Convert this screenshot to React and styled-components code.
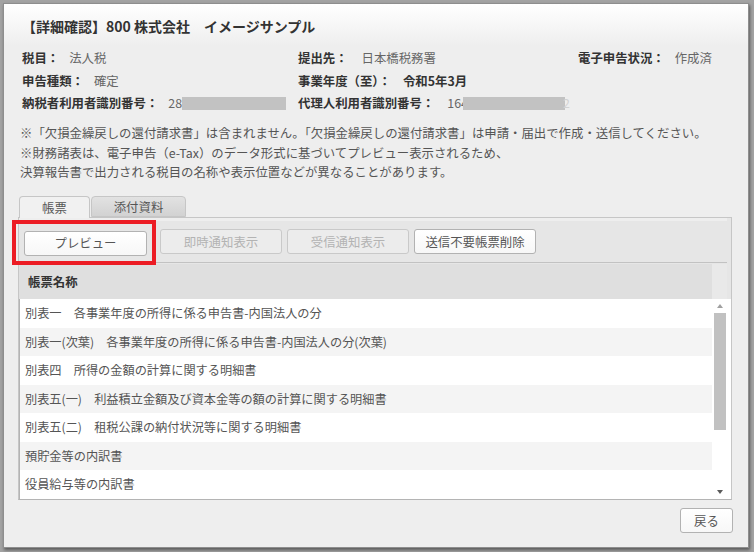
import React from "react";
import styled, { createGlobalStyle } from "styled-components";

const GlobalStyle = createGlobalStyle`
  html, body {
    margin: 0;
    padding: 0;
  }
  body {
    background: #a3a3a3;
    font-family: "Noto Sans CJK JP", "Noto Sans", sans-serif;
    color: #333;
  }
`;

const Backdrop = styled.div`
  width: 754px;
  height: 552px;
  box-sizing: border-box;
  padding: 3px 0 0 3px;
  overflow: hidden;
`;

const Dialog = styled.div`
  width: 746px;
  height: 545px;
  box-sizing: border-box;
  border: 1px solid #8e8e8e;
  background: linear-gradient(#ffffff, #eeeeee 42px, #eeeeee);
  box-shadow: 1px 2px 3px rgba(0, 0, 0, 0.45);
  display: flex;
  flex-direction: column;
  padding: 0 16px 0 14px;
`;

const Title = styled.h1`
  margin: 0;
  padding: 12px 4px 10px;
  font-size: 14px;
  line-height: 20px;
  font-weight: 700;
  color: #333;
`;

const InfoGrid = styled.div`
  display: grid;
  grid-template-columns: 276px 280px 1fr;
  grid-auto-rows: 22.5px;
  margin-top: 1px;
  padding-left: 4px;
  font-size: 12.4px;
`;

const Field = styled.div`
  display: flex;
  align-items: center;
  white-space: nowrap;
  grid-column: ${(p) => p.$col || "auto"};
`;

const Label = styled.span`
  font-weight: 700;
  color: #333;
`;

const Value = styled.span`
  margin-left: ${(p) => p.$gap || 10}px;
  color: ${(p) => (p.$strong ? "#333" : "#666")};
  font-weight: ${(p) => (p.$strong ? 700 : 400)};
  display: flex;
  align-items: center;
`;

const Masked = styled.span`
  display: inline-block;
  width: ${(p) => p.$w}px;
  height: 13px;
  margin-left: ${(p) => p.$ml || 0}px;
  background: #c2c2c2;
`;

const Faint = styled.span`
  margin-left: -2px;
  color: #d2d2d2;
`;

const Notes = styled.div`
  margin-top: 9.5px;
  padding-left: 2px;
  font-size: 12.4px;
  line-height: 19.5px;
  color: #555;
  white-space: nowrap;
`;

const TabBar = styled.div`
  display: flex;
  align-items: flex-end;
  height: 22px;
  margin-top: 12.5px;
  padding-left: 1px;
  border-bottom: 1px solid #c6c6c6;
`;

const Tab = styled.div`
  box-sizing: border-box;
  width: ${(p) => p.$w}px;
  height: ${(p) => (p.$active ? 22 : 21)}px;
  margin-right: 1px;
  margin-bottom: ${(p) => (p.$active ? -1 : 0)}px;
  display: flex;
  align-items: center;
  justify-content: center;
  font-size: 12.4px;
  color: #555;
  border: 1px solid #c6c6c6;
  border-bottom: ${(p) => (p.$active ? "none" : "1px solid #c6c6c6")};
  border-radius: 4px 4px 0 0;
  background: ${(p) =>
    p.$active ? "#f1f1f1" : "linear-gradient(#e2e2e2, #d2d2d2)"};
`;

const Panel = styled.div`
  flex: none;
  height: 282px;
  box-sizing: border-box;
  display: flex;
  flex-direction: column;
  background: #e6e6e6;
  border: 1px solid #c6c6c6;
  border-top: none;
  border-bottom-color: #b4b4b4;
`;

const Toolbar = styled.div`
  flex: none;
  display: flex;
  align-items: flex-start;
  gap: 5px;
  height: 45px;
  box-sizing: border-box;
  padding: 11px 0 0 5px;
  margin-right: 4px;
  border-bottom: 1px solid #c2c2c2;
  background: linear-gradient(#eeeeee 0, #eeeeee 3px, #e6e6e6 3px);
`;

const Highlight = styled.div`
  position: relative;
  margin-right: 8px;

  &::after {
    content: "";
    position: absolute;
    top: -9px;
    left: -12px;
    right: -9px;
    bottom: -9px;
    border: 4px solid #ec1c24;
    pointer-events: none;
  }
`;

const Button = styled.button`
  box-sizing: border-box;
  width: ${(p) => p.$w || 123}px;
  height: 25px;
  padding: 0;
  border-radius: 3px;
  font-family: inherit;
  font-size: 12.4px;
  border: 1px solid ${(p) => (p.disabled ? "#c9c9c9" : "#b2b2b2")};
  background: ${(p) => (p.disabled ? "#ececec" : "linear-gradient(#ffffff, #f7f7f7)")};
  color: ${(p) => (p.disabled ? "#b3b3b3" : "#555")};
  cursor: ${(p) => (p.disabled ? "default" : "pointer")};
`;

const List = styled.div`
  flex: 1;
  display: flex;
  flex-direction: column;
  min-height: 0;
  margin-top: 1px;
`;

const HeaderRow = styled.div`
  flex: none;
  display: flex;
  height: 35px;
  margin-right: 4px;
`;

const HeaderCell = styled.div`
  flex: 1;
  display: flex;
  align-items: center;
  padding-left: 9px;
  background: #dfdfdf;
  font-size: 12.4px;
  font-weight: 700;
  color: #333;
`;

const HeaderGap = styled.div`
  width: 15px;
  background: #e9e9e9;
`;

const Body = styled.div`
  flex: 1;
  display: flex;
  min-height: 0;
  background: #ffffff;
  border-left: 1px solid #b4b4b4;
`;

const Rows = styled.div`
  flex: 1;
  overflow: hidden;
`;

const Row = styled.div`
  height: 28.5px;
  display: flex;
  align-items: center;
  padding-left: 5px;
  font-size: 12.2px;
  color: #555;
  white-space: nowrap;
  background: ${(p) => (p.$odd ? "#f4f4f4" : "#ffffff")};
`;

const Scrollbar = styled.div`
  width: 15px;
  margin-right: 4px;
  display: flex;
  flex-direction: column;
  align-items: center;
  background: #ffffff;
`;

const Arrow = styled.div`
  flex: none;
  height: 14px;
  width: 100%;
  display: flex;
  align-items: center;
  justify-content: center;

  &::before {
    content: "";
    border-left: 3.5px solid transparent;
    border-right: 3.5px solid transparent;
    ${(p) =>
      p.$down ? "border-top: 4px solid #5a5a5a;" : "border-bottom: 4px solid #a0a0a0;"}
  }
`;

const Track = styled.div`
  flex: 1;
  width: 12px;
`;

const Thumb = styled.div`
  width: 12px;
  height: 117px;
  background: #c1c1c1;
`;

const Footer = styled.div`
  flex: none;
  display: flex;
  justify-content: flex-end;
  padding-top: 8px;
  margin-right: -1px;
`;

const rows = [
  "別表一　各事業年度の所得に係る申告書-内国法人の分",
  "別表一(次葉)　各事業年度の所得に係る申告書-内国法人の分(次葉)",
  "別表四　所得の金額の計算に関する明細書",
  "別表五(一)　利益積立金額及び資本金等の額の計算に関する明細書",
  "別表五(二)　租税公課の納付状況等に関する明細書",
  "預貯金等の内訳書",
  "役員給与等の内訳書",
];

export default function App() {
  return (
    <>
      <GlobalStyle />
      <Backdrop>
        <Dialog>
          <Title>【詳細確認】800 株式会社　イメージサンプル</Title>

          <InfoGrid>
            <Field>
              <Label>税目：</Label>
              <Value>法人税</Value>
            </Field>
            <Field>
              <Label>提出先：</Label>
              <Value $gap={14}>日本橋税務署</Value>
            </Field>
            <Field>
              <Label>電子申告状況：</Label>
              <Value>作成済</Value>
            </Field>
            <Field>
              <Label>申告種類：</Label>
              <Value>確定</Value>
            </Field>
            <Field $col="span 2">
              <Label>事業年度（至）：</Label>
              <Value $gap={12} $strong>令和5年3月</Value>
            </Field>
            <Field>
              <Label>納税者利用者識別番号：</Label>
              <Value>
                28
                <Masked $w={104} />
              </Value>
            </Field>
            <Field $col="span 2">
              <Label>代理人利用者識別番号：</Label>
              <Value $gap={13}>
                164
                <Masked $w={102} $ml={-5} />
                <Faint>2</Faint>
              </Value>
            </Field>
          </InfoGrid>

          <Notes>
            <div>※「欠損金繰戻しの還付請求書」は含まれません。「欠損金繰戻しの還付請求書」は申請・届出で作成・送信してください。</div>
            <div>※財務諸表は、電子申告（e-Tax）のデータ形式に基づいてプレビュー表示されるため、</div>
            <div>決算報告書で出力される税目の名称や表示位置などが異なることがあります。</div>
          </Notes>

          <TabBar>
            <Tab $active $w={71}>帳票</Tab>
            <Tab $w={95}>添付資料</Tab>
          </TabBar>

          <Panel>
            <Toolbar>
              <Highlight>
                <Button>プレビュー</Button>
              </Highlight>
              <Button disabled $w={122}>即時通知表示</Button>
              <Button disabled $w={122}>受信通知表示</Button>
              <Button $w={122}>送信不要帳票削除</Button>
            </Toolbar>

            <List>
              <HeaderRow>
                <HeaderCell>帳票名称</HeaderCell>
                <HeaderGap />
              </HeaderRow>
              <Body>
                <Rows>
                  {rows.map((r, i) => (
                    <Row key={r} $odd={i % 2 === 1}>
                      {r}
                    </Row>
                  ))}
                </Rows>
                <Scrollbar>
                  <Arrow />
                  <Track>
                    <Thumb />
                  </Track>
                  <Arrow $down />
                </Scrollbar>
              </Body>
            </List>
          </Panel>

          <Footer>
            <Button $w={53}>戻る</Button>
          </Footer>
        </Dialog>
      </Backdrop>
    </>
  );
}
